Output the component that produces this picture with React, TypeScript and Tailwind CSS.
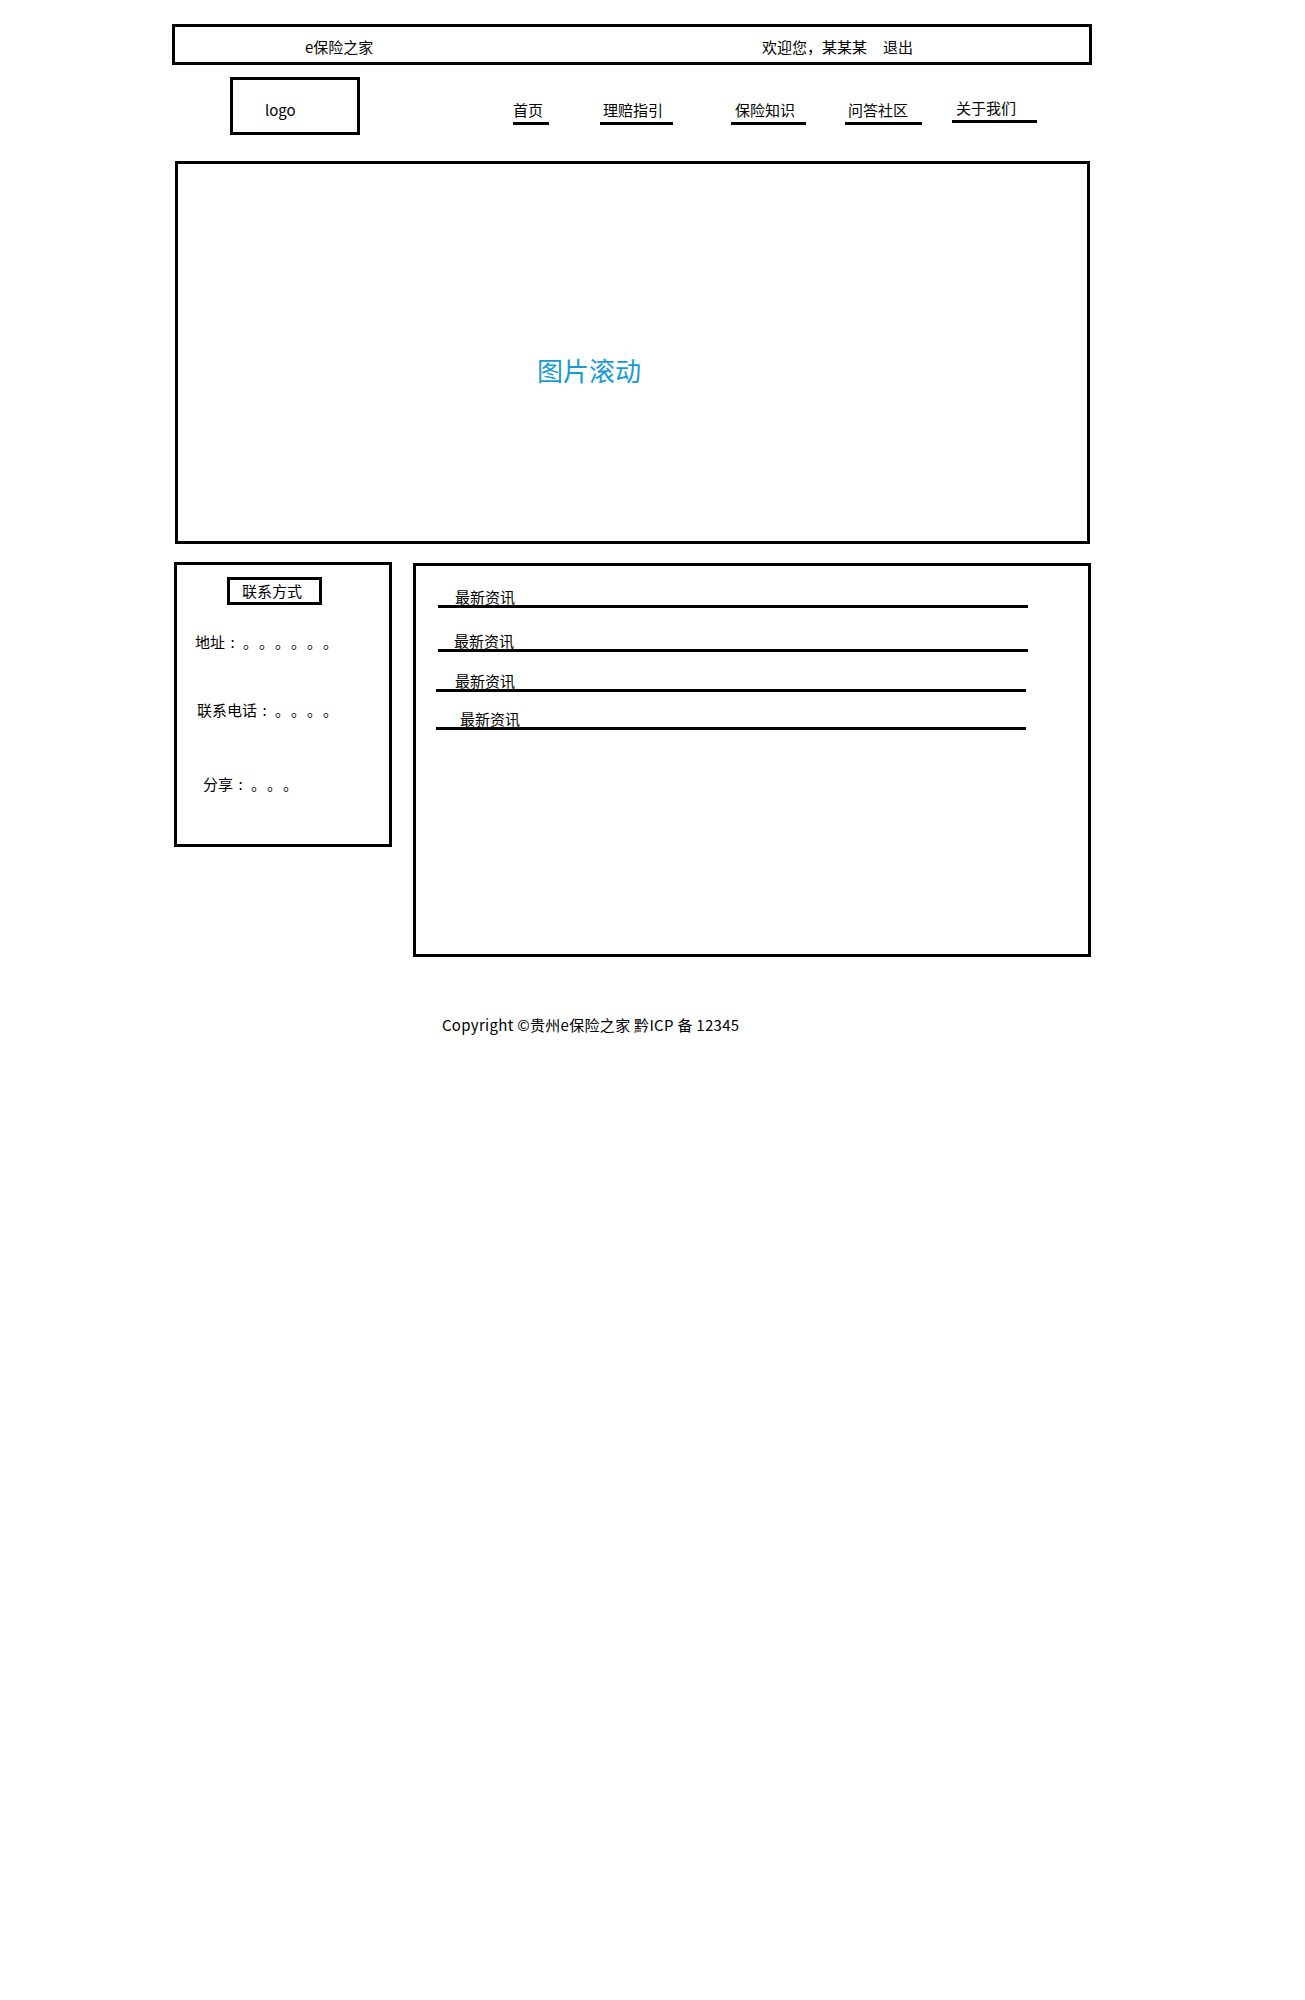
import React from 'react';

const navItems = [
  { label: '首页', gap: 'ml-[153px]', width: 'w-[36px]', pad: 'pl-[0px]', top: 'mt-[23px]' },
  { label: '理赔指引', gap: 'ml-[51px]', width: 'w-[73px]', pad: 'pl-[3px]', top: 'mt-[23px]' },
  { label: '保险知识', gap: 'ml-[58px]', width: 'w-[75px]', pad: 'pl-[4px]', top: 'mt-[23px]' },
  { label: '问答社区', gap: 'ml-[39px]', width: 'w-[77px]', pad: 'pl-[3px]', top: 'mt-[23px]' },
  { label: '关于我们', gap: 'ml-[30px]', width: 'w-[85px]', pad: 'pl-[4px]', top: 'mt-[21px]' },
];

const newsRows = [
  { top: 'mt-[23px]', start: 'ml-[22px]', pad: 'pl-[17px]' },
  { top: 'mt-[25px]', start: 'ml-[22px]', pad: 'pl-[16px]' },
  { top: 'mt-[21px]', start: 'ml-[20px]', pad: 'pl-[19px]' },
  { top: 'mt-[19px]', start: 'ml-[20px]', pad: 'pl-[24px]' },
];

const contacts = [
  { label: '地址', dots: 6, pos: 'ml-[18px] mt-[27px]' },
  { label: '联系电话', dots: 4, pos: 'ml-[20px] mt-[48px]' },
  { label: '分享', dots: 3, pos: 'ml-[26px] mt-[54px]' },
];

const NavLink: React.FC<{ item: (typeof navItems)[number] }> = ({ item }) => (
  <div className={`${item.gap} ${item.top} ${item.width} flex flex-col`}>
    <span className={`${item.pad} text-[15px] leading-[20px] whitespace-nowrap`}>{item.label}</span>
    <div className="mt-[2px] h-[3px] bg-black" />
  </div>
);

// full-width colon and circles, each kept in its own 15-16px cell
const ContactLine: React.FC<{ label: string; dots: number; pos: string }> = ({ label, dots, pos }) => (
  <div className={`${pos} flex items-end text-[15px] leading-[20px] whitespace-nowrap`}>
    <span>{label}</span>
    <span className="inline-block w-[15px] text-center">:</span>
    {Array.from({ length: dots }).map((_, i) => (
      <span key={i} className="inline-block w-[16px] pl-[3px]">。</span>
    ))}
  </div>
);

const ContactPanel: React.FC = () => (
  <div className="ml-[2px] mt-[18px] w-[218px] h-[285px] border-[3px] border-black flex flex-col">
    <div className="ml-[50px] mt-[12px] w-[95px] h-[28px] border-[3px] border-black pl-[12px] text-[15px] leading-[22px]">
      联系方式
    </div>
    {contacts.map((c) => (
      <ContactLine key={c.label} {...c} />
    ))}
  </div>
);

const NewsPanel: React.FC = () => (
  <div className="ml-[21px] mt-[19px] w-[678px] h-[394px] border-[3px] border-black flex flex-col">
    {newsRows.map((row, i) => (
      <div key={i} className={`${row.top} ${row.start} w-[590px] border-b-[3px] border-black`}>
        <span className={`${row.pad} block text-[15px] leading-[16px]`}>最新资讯</span>
      </div>
    ))}
  </div>
);

export default function App() {
  return (
    <div
      className="min-h-[2000px] w-full bg-white text-black"
      style={{ fontFamily: '"Noto Sans CJK SC", "Noto Sans", sans-serif' }}
    >
      <div className="ml-[172px] w-[920px] pt-[24px] flex flex-col">
        {/* top bar */}
        <div className="h-[41px] border-[3px] border-black flex items-start pt-[10px] text-[15px] leading-[20px]">
          <span className="ml-[130px] w-[457px] whitespace-nowrap">e保险之家</span>
          <span className="whitespace-nowrap">欢迎您，某某某</span>
          <span className="ml-[16px] whitespace-nowrap">退出</span>
        </div>

        {/* logo + nav */}
        <div className="mt-[12px] flex items-start">
          <div className="ml-[58px] w-[130px] h-[58px] border-[3px] border-black pl-[32px] pt-[20px] text-[15px] leading-[20px]">
            logo
          </div>
          {navItems.map((item) => (
            <NavLink key={item.label} item={item} />
          ))}
        </div>

        {/* banner */}
        <div className="ml-[3px] mt-[26px] w-[915px] h-[383px] border-[3px] border-black pl-[359px] pt-[189px]">
          <span className="text-[26px] leading-[34px] text-[#169bd5] whitespace-nowrap">图片滚动</span>
        </div>

        <div className="flex items-start">
          <ContactPanel />
          <NewsPanel />
        </div>

        <div className="ml-[270px] mt-[58px] text-[15px] leading-[20px] tracking-[0.3px] whitespace-nowrap">
          Copyright ©贵州e保险之家 黔ICP 备 12345
        </div>
      </div>
    </div>
  );
}
